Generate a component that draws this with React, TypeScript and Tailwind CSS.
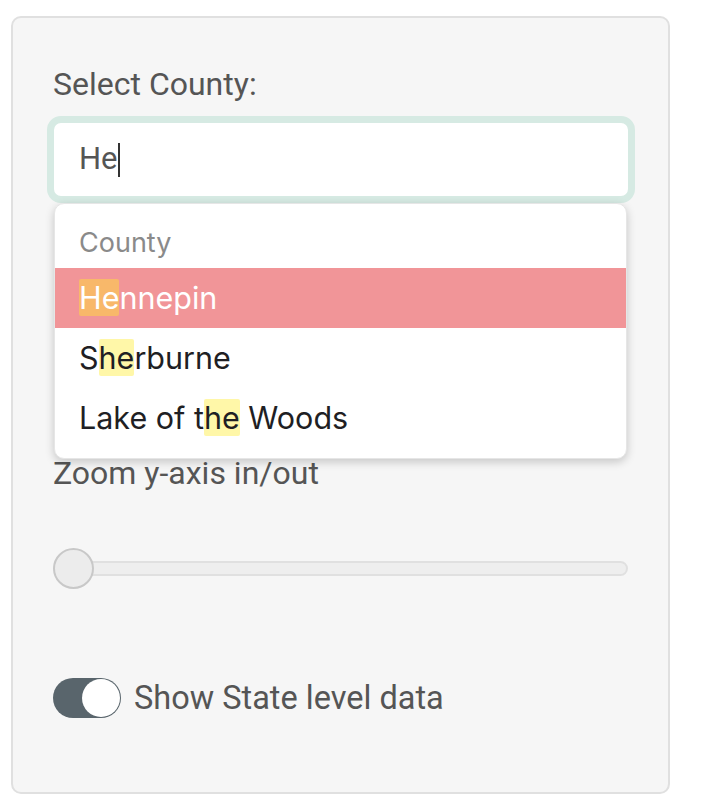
export default function App() {
  const options = [
    { pre: "", hit: "He", post: "nnepin", active: true },
    { pre: "S", hit: "he", post: "rburne", active: false },
    { pre: "Lake of t", hit: "he", post: " Woods", active: false },
  ];

  return (
    <div className="min-h-screen bg-white pt-4 pl-[11px]" style={{ fontFamily: "Roboto, 'Liberation Sans', sans-serif" }}>
      <div className="w-[659px] h-[778px] rounded-[10px] border-2 border-[#e0e0e0] bg-[#f6f6f6] px-[40px] pt-[46px]">
        <label className="block text-[32px] leading-[40px] text-[#555]">Select County:</label>

        <div className="relative mt-[12px] w-[588px] -ml-[6px]">
          <div className="rounded-[14px] border-[7px] border-[#d6eae3] bg-white h-[87px] flex items-center pl-[25px]">
            <span className="text-[31px] text-[#555]">He</span>
            <span className="w-[2px] h-[34px] bg-[#333]" />
          </div>

          <div className="absolute left-[7px] top-[87px] w-[573px] z-10 rounded-[10px] bg-white shadow-[0_3px_10px_rgba(0,0,0,0.2)] border border-[#e6e6e6] overflow-hidden" style={{ fontFamily: "Inter, Roboto, sans-serif" }}>
            <div className="h-[64px] flex items-end pb-[5px] pl-[24px]">
              <span className="text-[27px] text-[#8a8a8a]">County</span>
            </div>
            {options.map((o) => (
              <div
                key={o.pre + o.post}
                className={`h-[60px] flex items-center pl-[24px] ${o.active ? "bg-[#f19598] text-white" : "text-[#1f1f24]"}`}
              >
                <span className="text-[30.5px] whitespace-pre">
                  {o.pre}
                  <span className={`rounded-[2px] ${o.active ? "bg-[#f8b86a]" : "bg-[#fff7a8]"}`}>{o.hit}</span>
                  {o.post}
                </span>
              </div>
            ))}
            <div className="h-[10px]" />
          </div>
        </div>

        <div className="mt-[252px] text-[32px] leading-[36px] text-[#555]">Zoom y-axis in/out</div>

        <div className="relative mt-[57px] h-[40px] w-[575px]">
          <div className="absolute left-0 right-0 top-[13px] h-[15px] rounded-full border-2 border-[#e0e0e0] bg-[#eeeeee]" />
          <div className="absolute left-[0px] top-0 h-[41px] w-[41px] rounded-full border-2 border-[#c8c8c8] bg-[#ececec]" />
        </div>

        <div className="mt-[86px] flex items-center gap-[13px]">
          <div className="relative w-[68px] h-[40px] rounded-full bg-[#59656c]">
            <div className="absolute right-[1px] top-[1px] w-[38px] h-[38px] rounded-full bg-white" />
          </div>
          <span className="text-[32.5px] text-[#555]">Show State level data</span>
        </div>
      </div>
    </div>
  );
}
